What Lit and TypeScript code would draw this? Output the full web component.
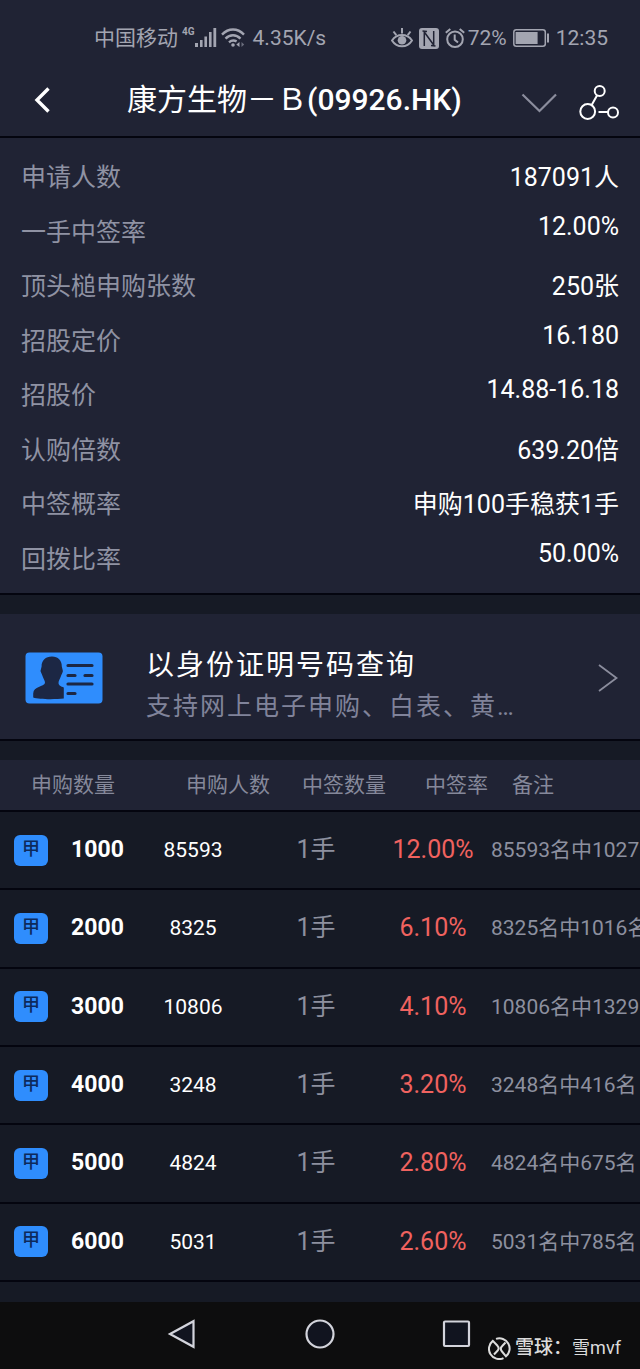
import { LitElement, html, css, svg } from "lit";
import { customElement, property } from "lit/decorators.js";

interface Fact {
  label: string;
  value: string;
}

interface Allotment {
  group: string;
  quantity: string;
  people: string;
  lots: string;
  rate: string;
  note: string;
}

const FACTS: Fact[] = [
  { label: "申请人数", value: "187091人" },
  { label: "一手中签率", value: "12.00%" },
  { label: "顶头槌申购张数", value: "250张" },
  { label: "招股定价", value: "16.180" },
  { label: "招股价", value: "14.88-16.18" },
  { label: "认购倍数", value: "639.20倍" },
  { label: "中签概率", value: "申购100手稳获1手" },
  { label: "回拨比率", value: "50.00%" },
];

const ROWS: Allotment[] = [
  { group: "甲", quantity: "1000", people: "85593", lots: "1手", rate: "12.00%", note: "85593名中1027" },
  { group: "甲", quantity: "2000", people: "8325", lots: "1手", rate: "6.10%", note: "8325名中1016名" },
  { group: "甲", quantity: "3000", people: "10806", lots: "1手", rate: "4.10%", note: "10806名中1329" },
  { group: "甲", quantity: "4000", people: "3248", lots: "1手", rate: "3.20%", note: "3248名中416名" },
  { group: "甲", quantity: "5000", people: "4824", lots: "1手", rate: "2.80%", note: "4824名中675名" },
  { group: "甲", quantity: "6000", people: "5031", lots: "1手", rate: "2.60%", note: "5031名中785名" },
];

const reset = css`
  :host,
  * {
    box-sizing: border-box;
  }
  button {
    margin: 0;
    padding: 0;
    border: 0;
    background: none;
    color: inherit;
    font: inherit;
    cursor: pointer;
    display: flex;
    align-items: center;
    justify-content: center;
  }
  svg {
    display: block;
    flex: none;
  }
`;

@customElement("status-bar")
export class StatusBar extends LitElement {
  static styles = [
    reset,
    css`
      :host {
        display: flex;
        justify-content: space-between;
        align-items: center;
        height: 76px;
        padding: 0 32px 0 94px;
        color: #a3a5b1;
        font-size: 21px;
        line-height: 24px;
      }
      .side {
        display: flex;
        align-items: center;
      }
      .net {
        align-self: flex-start;
        margin-left: 4px;
        font-size: 10px;
        font-weight: 700;
        line-height: 12px;
      }
      .wifi {
        margin: 0 8px 0 4px;
      }
      .nfc {
        margin: 0 6px;
      }
      .alarm {
        margin-right: 3px;
      }
      .battery {
        margin: 0 6px;
      }
    `,
  ];

  render() {
    return html`
      <div class="side">
        <span>中国移动</span>
        <span class="net">4G</span>
        <svg width="22" height="20" viewBox="0 0 22 20" fill="#a3a5b1" aria-hidden="true">
          <rect x="0" y="15" width="3" height="4" />
          <rect x="5" y="12" width="2.6" height="7" />
          <rect x="9.4" y="8.5" width="2.6" height="10.5" />
          <rect x="14" y="4" width="2.6" height="15" />
          <rect x="18.4" y="0" width="2.8" height="19" />
        </svg>
        <svg class="wifi" width="24" height="20" viewBox="0 0 24 20" fill="none" stroke="#a3a5b1" stroke-width="2.4" aria-hidden="true">
          <path d="M1 6.6C7.5-.2 16.500-.2 23 6.600" />
          <path d="M4.500 10.600C9 6.200 15 6.200 19.500 10.600" />
          <path d="M8 14.300C10.400 12.200 13 12 15.600 13.400" />
          <circle cx="12" cy="17" r="1.800" fill="#a3a5b1" stroke="none" />
          <path d="M18.500 14v5l-3.200-2.500z" fill="#a3a5b1" stroke="none" />
          <path d="M20.500 14v5l2.700-2.500z" fill="#6b6e7d" stroke="none" />
        </svg>
        <span>4.35K/s</span>
      </div>
      <div class="side">
        <svg width="22" height="20" viewBox="0 0 22 20" fill="none" stroke="#a3a5b1" stroke-width="2" aria-hidden="true">
          <path d="M1 12.500C6 5.200 16 5.200 21 12.500C16 20.300 6 20.300 1 12.500Z" />
          <circle cx="11" cy="12.300" r="4.300" fill="#a3a5b1" stroke="none" />
          <path d="M11 0v5.500M2.500 3.500l2.800 3.700M19.500 3.500l-2.800 3.700" />
        </svg>
        <svg class="nfc" width="20" height="21" viewBox="0 0 20 21" aria-hidden="true">
          <rect width="20" height="21" rx="3" fill="#a3a5b1" />
          <path d="M5.300 18V4L14.700 17V3" fill="none" stroke="#202334" stroke-width="1.500" stroke-linejoin="round" />
          <path d="M3.500 3L8 3.500M12 17.500L16.500 18" fill="none" stroke="#202334" stroke-width="1.500" />
        </svg>
        <svg class="alarm" width="20" height="21" viewBox="0 0 20 21" fill="none" stroke="#a3a5b1" stroke-width="2" aria-hidden="true">
          <circle cx="10" cy="11.300" r="7.800" />
          <path d="M9.700 6.500v5.300l3.300 2.700M.8 4.800L5.300 1M19.200 4.800L14.700 1" />
        </svg>
        <span>72%</span>
        <svg class="battery" width="37" height="18" viewBox="0 0 37 18" aria-hidden="true">
          <rect x=".8" y=".8" width="31.500" height="16.400" rx="2.500" fill="none" stroke="#a3a5b1" stroke-width="1.500" />
          <rect x="2.600" y="3" width="22" height="12" fill="#a3a5b1" />
          <rect x="34" y="4.500" width="2" height="9" fill="#a3a5b1" />
        </svg>
        <span>12:35</span>
      </div>
    `;
  }
}

@customElement("title-bar")
export class TitleBar extends LitElement {
  static styles = [
    reset,
    css`
      :host {
        display: flex;
        align-items: center;
        height: 62px;
        padding: 0 21px 12px 22px;
        border-bottom: 2px solid #04050f;
        color: #fff;
      }
      .back {
        width: 40px;
        height: 44px;
      }
      .title {
        flex: 1;
        margin: 0 0 0 65px;
        font-size: 30px;
        font-weight: 400;
        line-height: 44px;
        white-space: nowrap;
      }
      .code {
        font-weight: 500;
      }
      .tools {
        display: flex;
        align-items: center;
        gap: 22px;
        padding-top: 5px;
      }
    `,
  ];

  render() {
    return html`
      <button class="back" aria-label="返回">
        <svg width="18" height="26" viewBox="0 0 18 26" fill="none" stroke="#fff" stroke-width="3.400">
          <path d="M15.500 1.500L4 13l11.500 11.500" />
        </svg>
      </button>
      <h1 class="title">康方生物－Ｂ<span class="code">(09926.HK)</span></h1>
      <div class="tools">
        <button aria-label="展开">
          <svg width="36" height="20" viewBox="0 0 36 20" fill="none" stroke="#8b8d9d" stroke-width="2.200">
            <path d="M1.500 1.500L18.500 18L35 1.500" />
          </svg>
        </button>
        <button aria-label="分享">
          <svg width="40" height="36" viewBox="0 0 40 36" fill="none" stroke="#fff" stroke-width="2">
            <circle cx="8.700" cy="26.500" r="7.400" />
            <circle cx="20.700" cy="6" r="5" />
            <circle cx="34" cy="27.500" r="5" />
            <path d="M12.700 20L18 10.500M19.500 27H29" />
          </svg>
        </button>
      </div>
    `;
  }
}

@customElement("fact-list")
export class FactList extends LitElement {
  @property({ attribute: false }) facts: Fact[] = [];

  static styles = [
    reset,
    css`
      :host {
        display: block;
        border-bottom: 2px solid #04050f;
      }
      .list {
        display: grid;
        grid-auto-rows: 1fr;
        min-height: 455px;
        margin: 0;
        padding: 19px 21px 0;
        font-size: 25px;
      }
      .row {
        display: flex;
        justify-content: space-between;
        align-items: flex-start;
      }
      .label {
        color: #8f92a3;
      }
      .value {
        margin: 0;
        color: #fff;
      }
    `,
  ];

  render() {
    return html`
      <dl class="list">
        ${this.facts.map(
          (f) => html`<div class="row">
            <dt class="label">${f.label}</dt>
            <dd class="value">${f.value}</dd>
          </div>`
        )}
      </dl>
    `;
  }
}

@customElement("id-query")
export class IdQuery extends LitElement {
  static styles = [
    reset,
    css`
      :host {
        display: block;
        border-bottom: 2px solid #04050f;
      }
      .link {
        display: flex;
        align-items: center;
        height: 125px;
        padding: 3px 22px 0 25px;
        color: inherit;
        text-decoration: none;
      }
      .texts {
        flex: 1;
        min-width: 0;
        margin-left: 43px;
        padding-top: 16px;
        letter-spacing: 2px;
        white-space: nowrap;
      }
      .main {
        display: block;
        color: #fff;
        font-size: 28px;
        line-height: 42px;
      }
      .sub {
        display: block;
        color: #80839a;
        font-size: 25px;
        line-height: 40px;
      }
    `,
  ];

  render() {
    return html`
      <a class="link" href="#query">
        <svg width="78" height="52" viewBox="0 0 78 52" aria-hidden="true">
          <rect x=".5" y=".5" width="77" height="51" rx="4" fill="#2f8dfd" />
          <path
            fill="#1c2744"
            d="M27 4.500C20.500 4.500 16.500 8.500 16.600 14.500L15.500 19C16 21 17 22 17.500 24C18.500 27 20 28.500 20 31C19 35 8.500 34 8.200 41.500V45.500C14 47.500 30 47.500 38.800 46.500V35.500C36 34.500 33.500 33.500 33.500 31C33.500 28.500 35 27 36 24C36.500 22 37.700 21 37.900 19L36.800 14.500C37 8.500 33 4.500 27 4.500Z"
          />
          <path d="M43 13.500H67M43 23.500H50M60 23.500H67M43 32H67M43 41.500H50" stroke="#1c2744" stroke-width="3.200" stroke-linecap="round" />
        </svg>
        <span class="texts">
          <span class="main">以身份证明号码查询</span>
          <span class="sub">支持网上电子申购、白表、黄…</span>
        </span>
        <svg width="20" height="28" viewBox="0 0 20 28" fill="none" stroke="#8b8d9d" stroke-width="1.800" aria-hidden="true">
          <path d="M1 1L18.500 14L1 27" />
        </svg>
      </a>
    `;
  }
}

@customElement("allotment-table")
export class AllotmentTable extends LitElement {
  @property({ attribute: false }) rows: Allotment[] = [];

  static styles = [
    reset,
    css`
      :host {
        display: block;
        overflow: hidden;
      }
      .table,
      .head {
        display: block;
      }
      .head-row,
      .row {
        display: grid;
        align-items: center;
        white-space: nowrap;
        border-bottom: 2px solid #04050f;
      }
      .head-row {
        grid-template-columns: 155fr 116fr 123fr 87fr 128fr;
        height: 52px;
        padding-left: 31px;
        background: #202334;
        color: #85889a;
        font-size: 21px;
        line-height: 32px;
        text-align: left;
      }
      .head-row th {
        padding: 0;
        font-weight: 400;
      }
      .body {
        display: grid;
        grid-auto-rows: 1fr;
        min-height: 470px;
      }
      .row {
        grid-template-columns: 50fr 95fr 96fr 150fr 84fr 165fr;
        text-align: center;
        line-height: 32px;
      }
      .row td,
      .row th {
        min-width: 0;
        padding: 0;
      }
      .tag {
        display: block;
        width: 34px;
        height: 31px;
        margin-left: 14px;
        border-radius: 6px;
        background: #2f8dfd;
        color: #0d2a5c;
        font-size: 18px;
        font-weight: 500;
        line-height: 28px;
      }
      .quantity {
        color: #fff;
        font-size: 23px;
        font-weight: 700;
      }
      .people {
        color: #fff;
        font-size: 21px;
      }
      .lots {
        color: #8d909f;
        font-size: 25px;
      }
      .rate {
        color: #f0625f;
        font-size: 25px;
      }
      .note {
        color: #8d909f;
        font-size: 21px;
        text-align: left;
      }
      .note-text {
        display: block;
        margin-left: 16px;
      }
    `,
  ];

  render() {
    return html`
      <table class="table">
        <thead class="head">
          <tr class="head-row">
            <th scope="col">申购数量</th>
            <th scope="col">申购人数</th>
            <th scope="col">中签数量</th>
            <th scope="col">中签率</th>
            <th scope="col">备注</th>
          </tr>
        </thead>
        <tbody class="body">
          ${this.rows.map(
            (r) => html`<tr class="row">
              <td><span class="tag">${r.group}</span></td>
              <th class="quantity" scope="row">${r.quantity}</th>
              <td class="people">${r.people}</td>
              <td class="lots">${r.lots}</td>
              <td class="rate">${r.rate}</td>
              <td class="note"><span class="note-text">${r.note}</span></td>
            </tr>`
          )}
        </tbody>
      </table>
    `;
  }
}

@customElement("system-nav")
export class SystemNav extends LitElement {
  static styles = [
    reset,
    css`
      :host {
        display: block;
        position: relative;
        background: #0d0d0e;
      }
      .keys {
        display: grid;
        grid-template-columns: repeat(3, 1fr);
        height: 67px;
        padding: 0 18% 3px;
      }
      .mark {
        position: absolute;
        right: 19px;
        bottom: 8px;
        display: flex;
        align-items: center;
        color: #dcdcdc;
        font-size: 18px;
        line-height: 26px;
      }
      .brand {
        margin-left: 4px;
        font-size: 19px;
        font-weight: 500;
      }
    `,
  ];

  private key(label: string, shape: unknown) {
    return html`<button aria-label=${label}>
      <svg width="32" height="32" viewBox="0 0 32 32" fill="#11141f" stroke="#d3d4dc" stroke-width="2.200">${shape}</svg>
    </button>`;
  }

  render() {
    return html`
      <nav class="keys">
        ${this.key("返回", svg`<path d="M3 16L26.500 3.200V28.800Z" />`)}
        ${this.key("主页", svg`<circle cx="16" cy="16" r="13.500" />`)}
        ${this.key("最近任务", svg`<rect x="3" y="3.500" width="25" height="24.500" rx="1" />`)}
      </nav>
      <div class="mark">
        <svg width="23" height="23" viewBox="0 0 23 23" fill="none" stroke="#dcdcdc" stroke-width="2" aria-hidden="true">
          <path d="M8 1.900A10.200 10.200 0 0 1 18 19.300L14 14.500C12.300 12.500 12.300 11 14 9.300L17.500 5.500" />
          <path d="M15.500 21.100A10.200 10.200 0 0 1 4.800 3.900L9.500 8.800C11.200 10.700 11.200 12 9.500 13.800L6 17.500" />
        </svg>
        <span class="brand">雪球：</span><span>雪mvf</span>
      </div>
    `;
  }
}

@customElement("app-root")
export class AppRoot extends LitElement {
  static styles = css`
    :host {
      display: flex;
      flex-direction: column;
      min-height: 100vh;
      overflow: hidden;
      background: #161a25;
      font-family: Roboto, "Noto Sans CJK SC", sans-serif;
    }
    .panel {
      background: #202334;
    }
    .content {
      display: flex;
      flex: 1;
      flex-direction: column;
      gap: 19px;
    }
  `;

  render() {
    return html`
      <header class="panel">
        <status-bar></status-bar>
        <title-bar></title-bar>
      </header>
      <main class="content">
        <fact-list class="panel" .facts=${FACTS}></fact-list>
        <id-query class="panel"></id-query>
        <allotment-table .rows=${ROWS}></allotment-table>
      </main>
      <system-nav></system-nav>
    `;
  }
}
